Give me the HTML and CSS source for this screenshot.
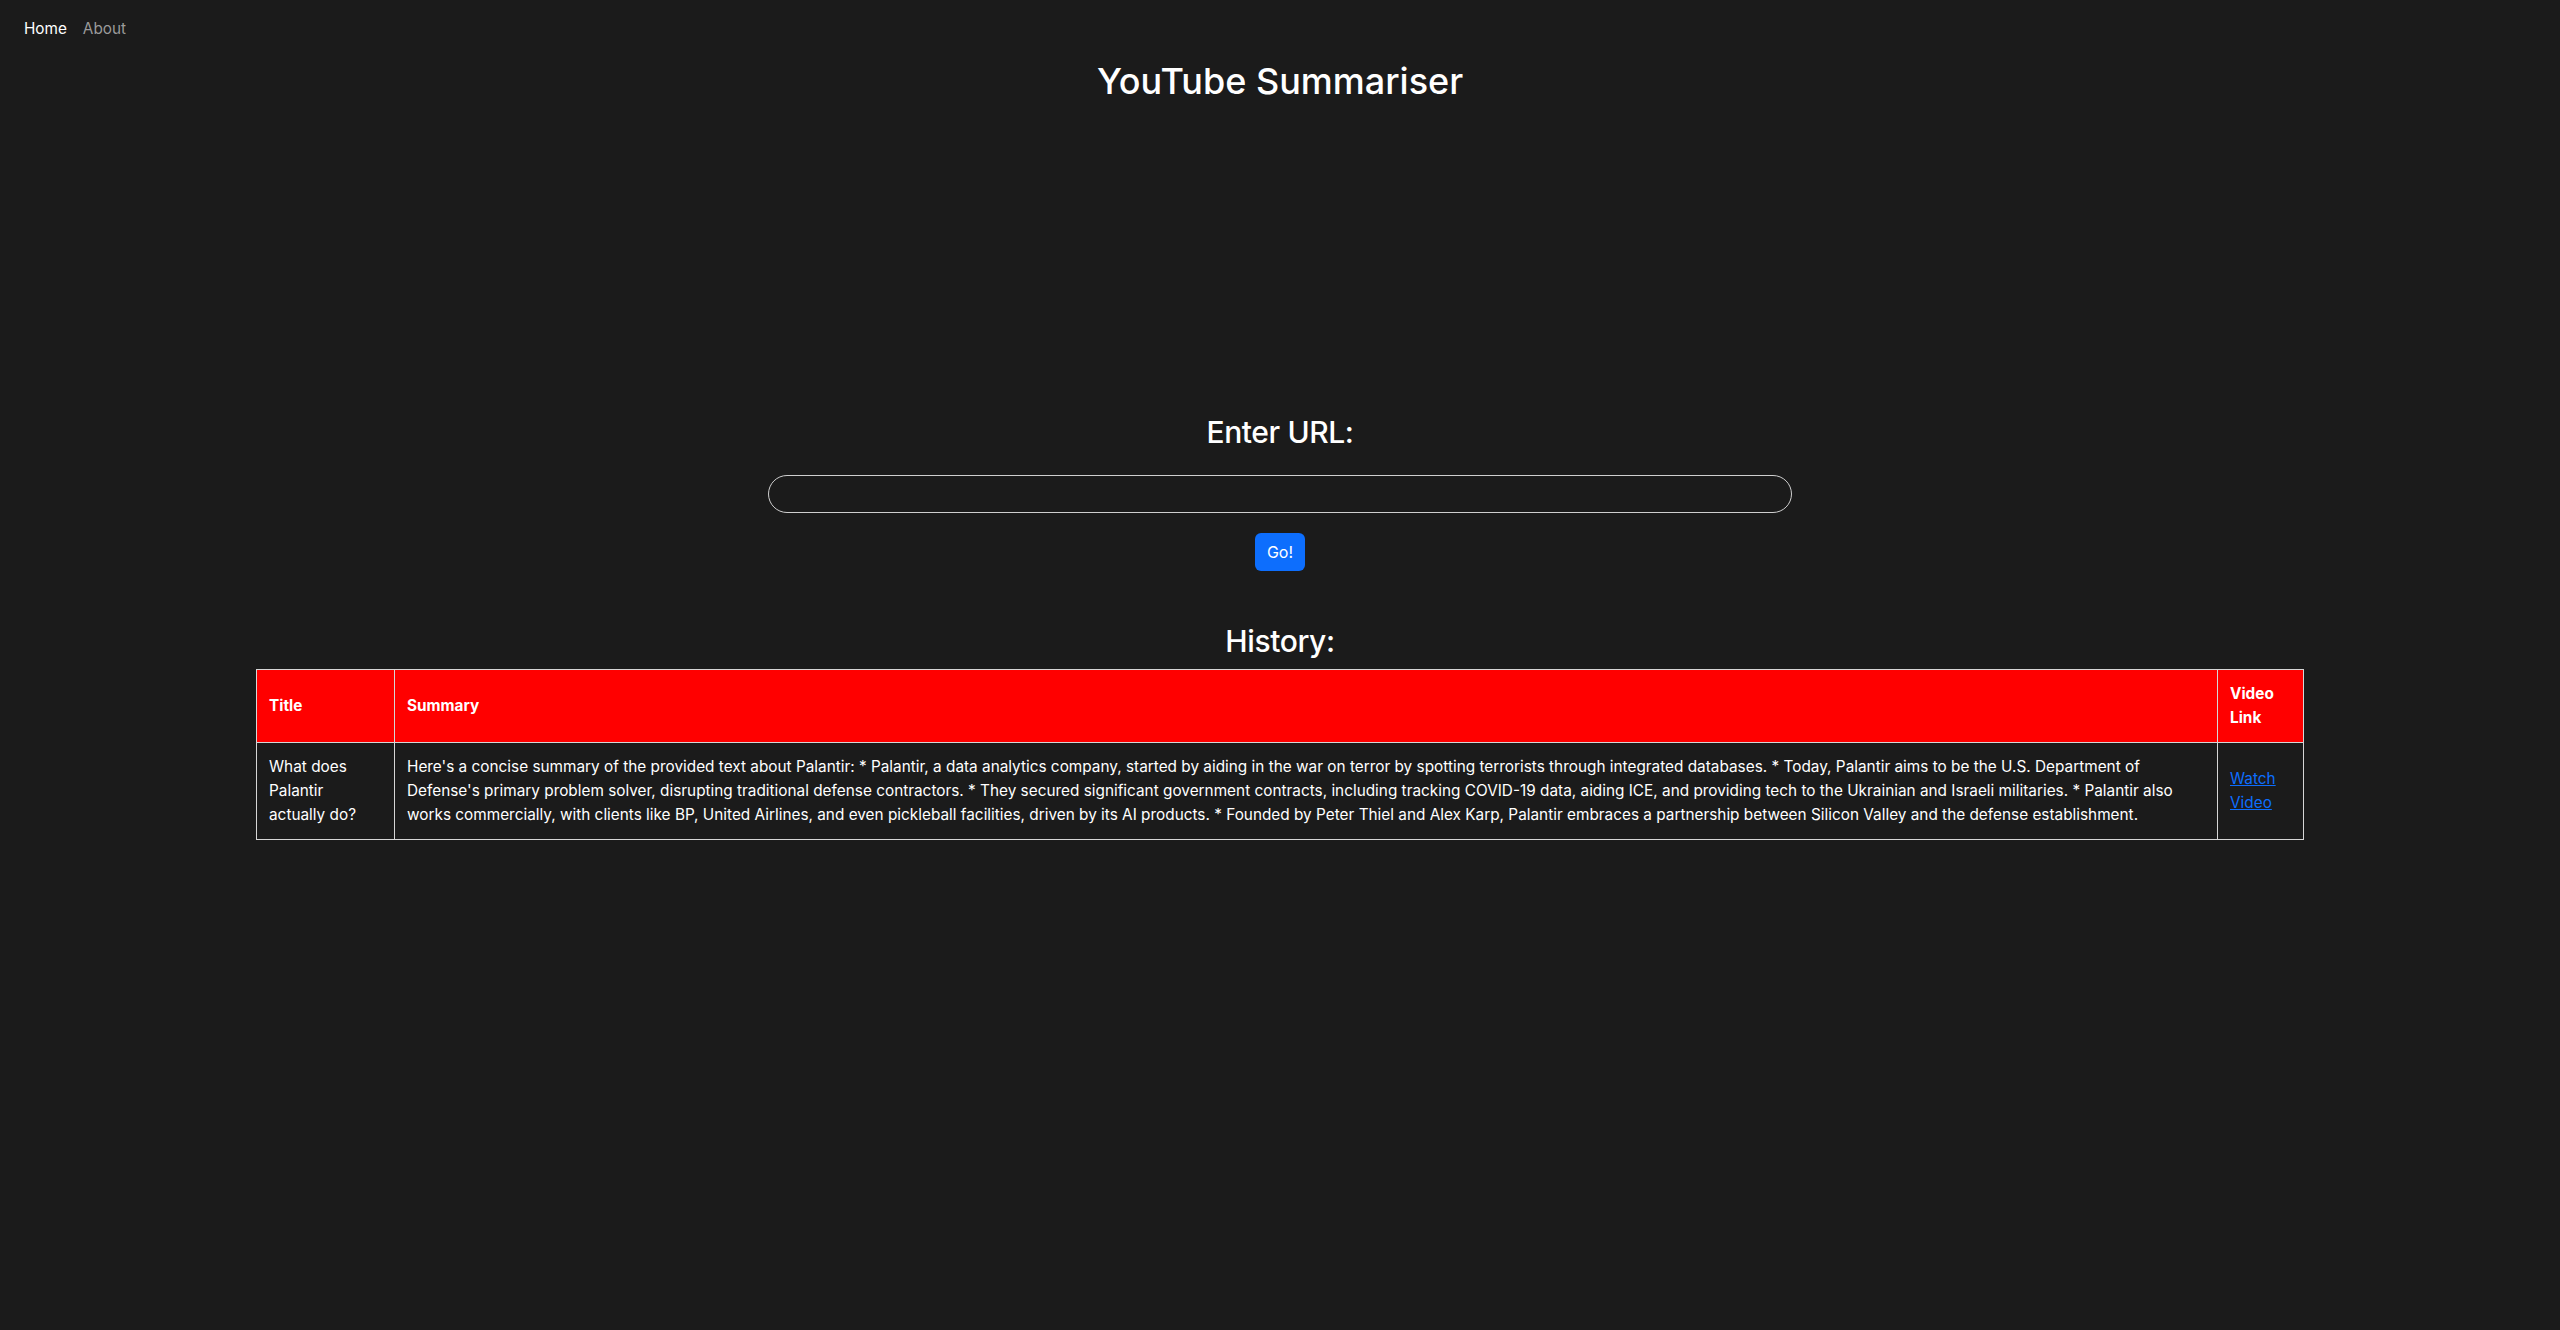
FILE: index.html
```html
<!DOCTYPE html>
<html lang="en">
<head>
<meta charset="utf-8">
<title>YouTube Summariser</title>
<link rel="stylesheet" href="styles.css">
</head>
<body>
<nav class="nav">
  <a class="nav-link active" href="#">Home</a>
  <a class="nav-link" href="#">About</a>
</nav>
<main class="main">
  <h1 class="title">YouTube Summariser</h1>
  <form class="url-form">
    <h2 class="section-heading">Enter URL:</h2>
    <input class="url-input" type="text">
    <button class="go-btn" type="button">Go!</button>
  </form>
  <h2 class="section-heading history-heading">History:</h2>
  <table class="history">
    <colgroup>
      <col class="col-title">
      <col>
      <col class="col-link">
    </colgroup>
    <thead>
      <tr>
        <th>Title</th>
        <th>Summary</th>
        <th>Video Link</th>
      </tr>
    </thead>
    <tbody>
      <tr>
        <td>What does Palantir actually do?</td>
        <td>Here's a concise summary of the provided text about Palantir: * Palantir, a data analytics company, started by aiding in the war on terror by spotting terrorists through integrated databases. * Today, Palantir aims to be the U.S. Department of Defense's primary problem solver, disrupting traditional defense contractors. * They secured significant government contracts, including tracking COVID-19 data, aiding ICE, and providing tech to the Ukrainian and Israeli militaries. * Palantir also works commercially, with clients like BP, United Airlines, and even pickleball facilities, driven by its AI products. * Founded by Peter Thiel and Alex Karp, Palantir embraces a partnership between Silicon Valley and the defense establishment.</td>
        <td><a class="video-link" href="#">Watch Video</a></td>
      </tr>
    </tbody>
  </table>
</main>
</body>
</html>
```

FILE: styles.css
```css
* { box-sizing: border-box; }

html, body {
  margin: 0;
  padding: 0;
  background: #1b1b1b;
  color: #ffffff;
  font-family: Inter, "Noto Sans", "Liberation Sans", sans-serif;
  font-size: 16px;
  line-height: 24px;
  min-height: 1330px;
}

.nav {
  display: flex;
  gap: 16px;
  padding: 17px 24px 0;
}

.nav-link {
  color: #9a9a9a;
  text-decoration: none;
  font-size: 15.3px;
  line-height: 24px;
}

.nav-link.active { color: #ffffff; }

.main {
  display: flex;
  flex-direction: column;
  align-items: center;
}

.title {
  margin: 19px 0 0;
  font-size: 36px;
  line-height: 43px;
  font-weight: 500;
}

.url-form {
  margin-top: 310px;
  width: 100%;
  display: flex;
  flex-direction: column;
  align-items: center;
}

.section-heading {
  margin: 0;
  font-size: 30px;
  line-height: 38px;
  font-weight: 500;
  letter-spacing: -0.4px;
}

.url-input {
  margin-top: 24px;
  width: 1024px;
  height: 38px;
  border: 1px solid #cfcfcf;
  border-radius: 19px;
  background: transparent;
  color: #fff;
  outline: none;
}

.go-btn {
  margin-top: 20px;
  height: 38px;
  padding: 0 12px;
  border: none;
  border-radius: 6px;
  background: #0d6efd;
  color: #fff;
  font-family: inherit;
  font-size: 16px;
}

.history-heading {
  margin-top: 51px;
}

.history {
  margin-top: 9px;
  width: 2048px;
  border-collapse: collapse;
  table-layout: fixed;
  font-size: 15.35px;
  line-height: 24px;
}

.col-title { width: 138px; }
.col-link { width: 86px; }

.history th,
.history td {
  border: 1px solid #d6d6d6;
  padding: 12px;
  text-align: left;
  vertical-align: middle;
}

.history th {
  background: #ff0000;
  font-weight: 700;
}

.video-link {
  color: #0d6efd;
}
```
